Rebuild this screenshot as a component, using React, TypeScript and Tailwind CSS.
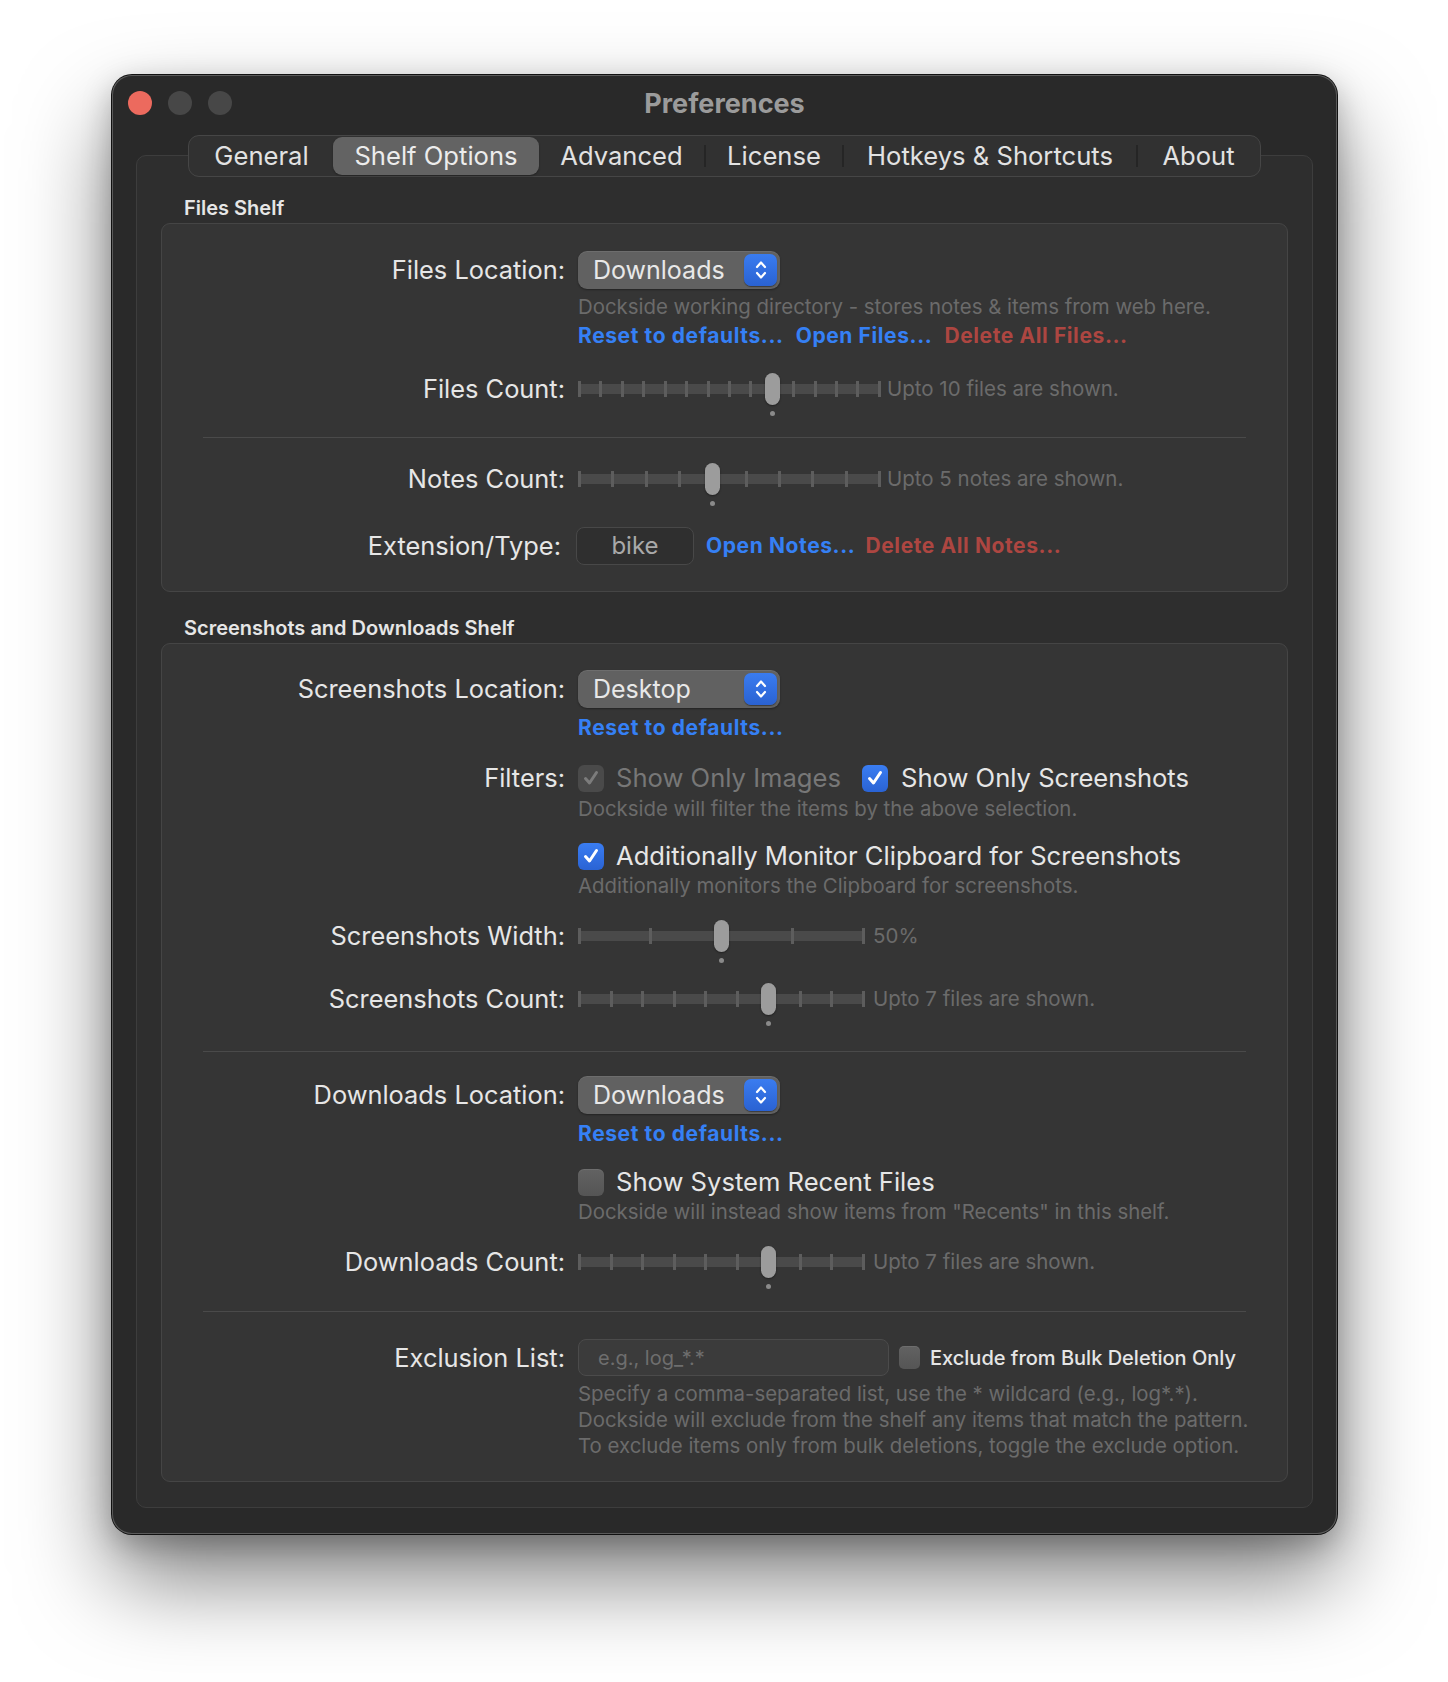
import React from "react";

const TABS = [
  { name: "General", w: "w-[143px]" },
  { name: "Shelf Options", w: "w-[206px]", active: true },
  { name: "Advanced", w: "w-[165px]" },
  { name: "License", w: "w-[138px]" },
  { name: "Hotkeys & Shortcuts", w: "w-[294px]" },
  { name: "About", w: "w-[123px]" },
];

/* ── Small controls ─────────────────────────────────────────── */

function Stepper() {
  return (
    <div className="w-[33px] h-[32px] rounded-[7px] bg-gradient-to-b from-[#3a7cf0] to-[#2a62d2] flex items-center justify-center shadow-[0_1px_1px_rgba(0,0,0,0.4)]">
      <svg width="16" height="24" viewBox="0 0 16 24" fill="none" stroke="white" strokeWidth="2.2" strokeLinecap="round" strokeLinejoin="round">
        <path d="M4 9 L8 4.5 L12 9" />
        <path d="M4 15 L8 19.5 L12 15" />
      </svg>
    </div>
  );
}

function Popup({ value }: { value: string }) {
  return (
    <div className="w-[202px] h-[38px] rounded-[9px] bg-[#616161] shadow-[inset_0_1px_0_rgba(255,255,255,0.08),0_1px_2px_rgba(0,0,0,0.35)] flex items-center justify-between pl-[15px] pr-[3px]">
      <span className="text-[25px] text-[#e8e8e8] leading-none">{value}</span>
      <Stepper />
    </div>
  );
}

function Check({ state, small }: { state: "on" | "off" | "disabled"; small?: boolean }) {
  const size = small ? "w-[21px] h-[23px] rounded-[5px]" : "w-[26px] h-[27px] rounded-[6px]";
  if (state === "off") {
    return <div className={`${size} shrink-0 bg-gradient-to-b from-[#626262] to-[#555555] shadow-[inset_0_1px_0_rgba(255,255,255,0.08)]`} />;
  }
  const on = state === "on";
  return (
    <div
      className={`${size} shrink-0 flex items-center justify-center ${
        on ? "bg-gradient-to-b from-[#3a7df2] to-[#2a63d4]" : "bg-[#4a4a4a]"
      }`}
    >
      <svg width="18" height="18" viewBox="0 0 18 18" fill="none" stroke={on ? "#ffffff" : "#7c7c7c"} strokeWidth="3" strokeLinecap="round" strokeLinejoin="round">
        <path d="M3.5 9.5 L7.5 14 L14.5 3.5" />
      </svg>
    </div>
  );
}

function Slider({ ticks, value, wide }: { ticks: number; value: number; wide?: boolean }) {
  const width = wide ? 303 : 287;
  const thumbLeft = (value / (ticks - 1)) * (width - 3) + 1.5 - 7.5;
  return (
    <div className={`relative h-[36px] flex items-center ${wide ? "w-[303px]" : "w-[287px]"}`}>
      <div className="w-full h-[10px] bg-[#4a4a4a] flex items-center justify-between">
        {Array.from({ length: ticks }).map((_, i) => (
          <div key={i} className="w-[3px] h-[16px] bg-[#5d5d5d] shrink-0" />
        ))}
      </div>
      <div
        className="absolute top-[2px] w-[15px] h-[32px] rounded-full bg-[#9c9c9c] shadow-[0_1px_2px_rgba(0,0,0,0.4)]"
        style={{ left: thumbLeft }}
      />
      <div className="absolute top-[40px] w-[5px] h-[5px] rounded-full bg-[#8a8a8a]" style={{ left: thumbLeft + 5 }} />
    </div>
  );
}

/* ── Row helpers ────────────────────────────────────────────── */

function Row({
  label,
  children,
  className = "",
}: {
  label?: string;
  children: React.ReactNode;
  className?: string;
}) {
  return (
    <div className={`flex items-center ${className}`}>
      <div className="w-[403px] shrink-0 text-right text-[25.4px] text-[#e6e6e6] leading-none whitespace-nowrap">{label}</div>
      <div className="ml-[13px] flex items-center">{children}</div>
    </div>
  );
}

function Note({ children, className = "" }: { children: React.ReactNode; className?: string }) {
  return (
    <div className={`pl-[416px] h-[24px] leading-[24px] text-[20.4px] text-[#6b6b6b] whitespace-nowrap ${className}`}>
      {children}
    </div>
  );
}

function Links({ items, className = "" }: { items: { t: string; red?: boolean }[]; className?: string }) {
  return (
    <div className={`pl-[416px] h-[26px] flex items-center gap-[12px] text-[21px] font-bold tracking-[0.6px] ${className}`}>
      {items.map((l) => (
        <span key={l.t} className={l.red ? "text-[#ad4641]" : "text-[#3580f5]"}>
          {l.t}
        </span>
      ))}
    </div>
  );
}

function Sep({ className = "" }: { className?: string }) {
  return <div className={`mx-[41px] h-px bg-[#4a4a4a] ${className}`} />;
}

function Hint({ children }: { children: React.ReactNode }) {
  return <span className="ml-[6px] text-[20.5px] text-[#6b6b6b] whitespace-nowrap">{children}</span>;
}

export default function App() {
  return (
    <div className="w-[1448px] h-[1682px] bg-white pt-[75px] pl-[112px] font-['Inter',sans-serif]">
      {/* ── Window ───────────────────────────────────────────── */}
      <div className="w-[1225px] rounded-[20px] bg-[#292929] pb-[26px] shadow-[inset_0_0_0_1px_#5a5a5a,0_0_0_1px_#111,0_45px_90px_rgba(0,0,0,0.5),0_10px_30px_rgba(0,0,0,0.25)]">
        {/* Title bar */}
        <div className="h-[56px] grid grid-cols-[1fr_auto_1fr] items-center">
          <div className="flex items-center gap-[16px] pl-[16px]">
            <div className="w-[24px] h-[24px] rounded-full bg-[#ec6a5e]" />
            <div className="w-[24px] h-[24px] rounded-full bg-[#474747]" />
            <div className="w-[24px] h-[24px] rounded-full bg-[#474747]" />
          </div>
          <div className="text-[27px] font-bold text-[#9b9b9b] leading-none">Preferences</div>
          <div />
        </div>

        <div className="px-[24px] mt-[4px]">
          {/* Tab bar */}
          <div className="relative z-10 mx-auto w-fit h-[42px] rounded-[11px] bg-[#313131] border border-[#464646] flex items-center p-[1px]">
            {TABS.map((t, i) => {
              const prevActive = i > 0 && TABS[i - 1].active;
              const showDivider = i > 0 && !t.active && !prevActive;
              return (
                <div key={t.name} className={`relative h-full flex items-center ${t.w}`}>
                  {showDivider && <div className="w-[2px] h-[22px] bg-[#252525] shrink-0" />}
                  <div
                    className={`flex-1 h-full flex items-center justify-center text-[25.6px] leading-none rounded-[9px] whitespace-nowrap ${
                      t.active ? "bg-[#636363] text-[#ececec] shadow-[0_1px_2px_rgba(0,0,0,0.3)]" : "text-[#e2e2e2]"
                    }`}
                  >
                    {t.name}
                  </div>
                </div>
              );
            })}
          </div>

          {/* Tab panel */}
          <div className="-mt-[22px] rounded-[10px] border border-[#3d3d3d] bg-[#2e2e2e] px-[24px] pt-[40px] pb-[25px]">
            <div className="pl-[23px] h-[24px] leading-[24px] text-[20px] font-semibold text-[#e6e6e6]">Files Shelf</div>

            {/* Files Shelf box */}
            <div className="mt-[3px] rounded-[9px] border border-[#454545] bg-[#353535] pt-[27px] pb-[26px]">
              <Row label="Files Location:" className="h-[38px]">
                <Popup value="Downloads" />
              </Row>
              <Note className="mt-[6px]">Dockside working directory - stores notes &amp; items from web here.</Note>
              <Links
                className="mt-[4px]"
                items={[{ t: "Reset to defaults..." }, { t: "Open Files..." }, { t: "Delete All Files...", red: true }]}
              />
              <Row label="Files Count:" className="mt-[22px] h-[36px]">
                <Slider ticks={15} value={9} wide />
                <Hint>Upto 10 files are shown.</Hint>
              </Row>
              <Sep className="mt-[30px]" />
              <Row label="Notes Count:" className="mt-[23px] h-[36px]">
                <Slider ticks={10} value={4} wide />
                <Hint>Upto 5 notes are shown.</Hint>
              </Row>
              <div className="mt-[30px] h-[38px] flex items-center">
                <div className="w-[399px] shrink-0 text-right text-[25.4px] text-[#e6e6e6] leading-none">Extension/Type:</div>
                <div className="ml-[15px] w-[118px] h-[38px] rounded-[8px] bg-[#2f2f2f] border border-[#484848] flex items-center justify-center text-[24px] text-[#a9a9a9]">
                  bike
                </div>
                <div className="ml-[12px] flex items-center gap-[10px] text-[21px] font-bold tracking-[0.6px]">
                  <span className="text-[#3580f5]">Open Notes...</span>
                  <span className="text-[#ad4641]">Delete All Notes...</span>
                </div>
              </div>
            </div>

            <div className="mt-[24px] pl-[23px] h-[24px] leading-[24px] text-[20px] font-semibold text-[#e6e6e6]">
              Screenshots and Downloads Shelf
            </div>

            {/* Screenshots and Downloads box */}
            <div className="mt-[3px] rounded-[9px] border border-[#454545] bg-[#353535] pt-[26px] pb-[22px]">
              <Row label="Screenshots Location:" className="h-[38px]">
                <Popup value="Desktop" />
              </Row>
              <Links className="mt-[7px]" items={[{ t: "Reset to defaults..." }]} />
              <Row label="Filters:" className="mt-[22px] h-[30px]">
                <Check state="disabled" />
                <span className="ml-[12px] text-[25.6px] text-[#777777] leading-none">Show Only Images</span>
                <span className="ml-[21px]" />
                <Check state="on" />
                <span className="ml-[13px] text-[25.6px] text-[#e6e6e6] leading-none">Show Only Screenshots</span>
              </Row>
              <Note className="mt-[4px]">Dockside will filter the items by the above selection.</Note>
              <Row className="mt-[20px] h-[30px]">
                <Check state="on" />
                <span className="ml-[12px] text-[25.6px] text-[#e6e6e6] leading-none whitespace-nowrap">
                  Additionally Monitor Clipboard for Screenshots
                </span>
              </Row>
              <Note className="mt-[3px]">Additionally monitors the Clipboard for screenshots.</Note>
              <Row label="Screenshots Width:" className="mt-[20px] h-[36px]">
                <Slider ticks={5} value={2} />
                <Hint>
                  <span className="ml-[2px]">50%</span>
                </Hint>
              </Row>
              <Row label="Screenshots Count:" className="mt-[27px] h-[36px]">
                <Slider ticks={10} value={6} />
                <Hint>
                  <span className="ml-[2px]">Upto 7 files are shown.</span>
                </Hint>
              </Row>
              <Sep className="mt-[34px]" />
              <Row label="Downloads Location:" className="mt-[24px] h-[38px]">
                <Popup value="Downloads" />
              </Row>
              <Links className="mt-[7px]" items={[{ t: "Reset to defaults..." }]} />
              <Row className="mt-[20px] h-[30px]">
                <Check state="off" />
                <span className="ml-[12px] text-[25.6px] text-[#e6e6e6] leading-none">Show System Recent Files</span>
              </Row>
              <Note className="mt-[3px]">Dockside will instead show items from "Recents" in this shelf.</Note>
              <Row label="Downloads Count:" className="mt-[20px] h-[36px]">
                <Slider ticks={10} value={6} />
                <Hint>
                  <span className="ml-[2px]">Upto 7 files are shown.</span>
                </Hint>
              </Row>
              <Sep className="mt-[31px]" />
              <Row label="Exclusion List:" className="mt-[27px] h-[37px]">
                <div className="w-[311px] h-[37px] rounded-[8px] bg-[#3b3b3b] border border-[#4b4b4b] flex items-center pl-[19px] text-[20px] text-[#6e6e6e]">
                  e.g., log_*.*
                </div>
                <div className="ml-[10px]">
                  <Check state="off" small />
                </div>
                <span className="ml-[10px] text-[20px] font-medium text-[#e6e6e6] whitespace-nowrap">
                  Exclude from Bulk Deletion Only
                </span>
              </Row>
              <div className="mt-[5px] pl-[416px] text-[20.4px] leading-[26px] text-[#6b6b6b] whitespace-nowrap">
                <div>Specify a comma-separated list, use the * wildcard (e.g., log*.*).</div>
                <div>Dockside will exclude from the shelf any items that match the pattern.</div>
                <div>To exclude items only from bulk deletions, toggle the exclude option.</div>
              </div>
            </div>
          </div>
        </div>
      </div>
    </div>
  );
}
